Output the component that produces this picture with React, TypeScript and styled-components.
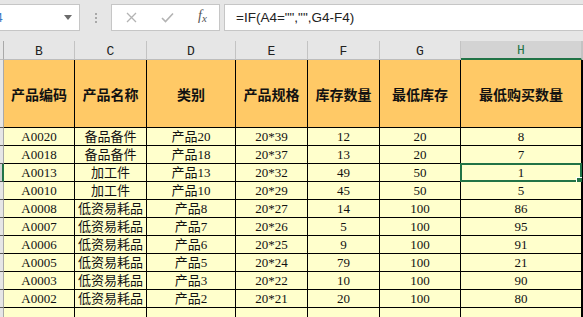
import React from 'react';
import styled, { createGlobalStyle, css } from 'styled-components';

const GREEN = '#217346';

const GlobalStyle = createGlobalStyle`
  html, body {
    margin: 0;
    padding: 0;
    background: #ffffff;
    overflow: hidden;
  }
  * {
    box-sizing: border-box;
  }
`;

const columns = ['B', 'C', 'D', 'E', 'F', 'G', 'H'];
const titles = ['产品编码', '产品名称', '类别', '产品规格', '库存数量', '最低库存', '最低购买数量'];

const rows: (string | number)[][] = [
  ['A0020', '备品备件', '产品20', '20*39', 12, 20, 8],
  ['A0018', '备品备件', '产品18', '20*37', 13, 20, 7],
  ['A0013', '加工件', '产品13', '20*32', 49, 50, 1],
  ['A0010', '加工件', '产品10', '20*29', 45, 50, 5],
  ['A0008', '低资易耗品', '产品8', '20*27', 14, 100, 86],
  ['A0007', '低资易耗品', '产品7', '20*26', 5, 100, 95],
  ['A0006', '低资易耗品', '产品6', '20*25', 9, 100, 91],
  ['A0005', '低资易耗品', '产品5', '20*24', 79, 100, 21],
  ['A0003', '低资易耗品', '产品3', '20*22', 10, 100, 90],
  ['A0002', '低资易耗品', '产品2', '20*21', 20, 100, 80],
];

const activeRow = 2;
const activeCol = 6;

const App = () => {
  return (
    <Page>
      <GlobalStyle />
      <FormulaBar>
        <NameBox>
          <NameText>H4</NameText>
          <svg width="8" height="5" viewBox="0 0 8 5">
            <path d="M0 0 H8 L4 5 Z" fill="#6b6b6b" />
          </svg>
        </NameBox>
        <Grip>
          <svg width="2" height="10" viewBox="0 0 2 10">
            <rect x="0" y="0" width="2" height="2" fill="#a8a8a8" />
            <rect x="0" y="4" width="2" height="2" fill="#a8a8a8" />
            <rect x="0" y="8" width="2" height="2" fill="#a8a8a8" />
          </svg>
        </Grip>
        <ButtonGroup>
          <IconButton>
            <svg width="11" height="11" viewBox="0 0 11 11">
              <path d="M1 1 L10 10 M10 1 L1 10" stroke="#b3b3b3" strokeWidth="1.3" fill="none" />
            </svg>
          </IconButton>
          <IconButton>
            <svg width="13" height="11" viewBox="0 0 13 11">
              <path d="M1 6 L4.5 9.5 L12 1.5" stroke="#b3b3b3" strokeWidth="1.6" fill="none" />
            </svg>
          </IconButton>
          <FxLabel>
            f<sub>x</sub>
          </FxLabel>
        </ButtonGroup>
        <FormulaInput>=IF(A4="","",G4-F4)</FormulaInput>
      </FormulaBar>

      <Sheet>
        <RowHead $kind="letters" />
        {columns.map((c, i) => (
          <ColLetter key={c} $active={i === activeCol}>
            {c}
          </ColLetter>
        ))}
        <ColLetter $active={false} />

        <RowHead $kind="title" />
        {titles.map((t) => (
          <TitleCell key={t}>{t}</TitleCell>
        ))}
        <TitleCell />

        {rows.map((r, ri) => (
          <React.Fragment key={ri}>
            <RowHead $kind="data" $active={ri === activeRow} />
            {r.map((v, ci) => (
              <DataCell key={ci}>
                {v}
                {ri === activeRow && ci === activeCol && (
                  <>
                    <Selection />
                    <FillHandle />
                  </>
                )}
              </DataCell>
            ))}
            <DataCell />
          </React.Fragment>
        ))}

        <RowHead $kind="data" />
        {columns.map((c) => (
          <DataCell key={c} />
        ))}
        <DataCell />
      </Sheet>
    </Page>
  );
};

export default App;

const Page = styled.div`
  width: 583px;
  height: 317px;
  overflow: hidden;
  background: #e6e6e6;
`;

const FormulaBar = styled.div`
  height: 41px;
  display: flex;
  align-items: flex-start;
  padding-top: 4px;
`;

const Box = css`
  height: 27px;
  background: #ffffff;
  border: 1px solid #c6c6c6;
`;

const NameBox = styled.div`
  ${Box};
  width: 100px;
  margin-left: -20px;
  display: flex;
  align-items: center;
  justify-content: space-between;
  padding: 0 7px 0 6px;
  border-left: none;
`;

const NameText = styled.span`
  font-family: 'Liberation Sans', Arial, sans-serif;
  font-size: 13px;
  color: #3b78c4;
`;

const Grip = styled.div`
  width: 31px;
  height: 27px;
  display: flex;
  align-items: center;
  justify-content: center;
`;

const ButtonGroup = styled.div`
  ${Box};
  width: 109px;
  display: flex;
  align-items: center;
  padding-left: 14px;
`;

const IconButton = styled.div`
  width: 35px;
  display: flex;
  align-items: center;
  justify-content: flex-start;
`;

const FxLabel = styled.div`
  font-family: 'Liberation Serif', serif;
  font-style: italic;
  font-size: 14px;
  color: #555555;
  margin-left: 2px;
  margin-top: -3px;

  sub {
    font-size: 11px;
    vertical-align: -2px;
  }
`;

const FormulaInput = styled.div`
  ${Box};
  flex: 1;
  margin-left: 4px;
  margin-right: -2px;
  display: flex;
  align-items: center;
  padding-left: 11px;
  font-family: 'Liberation Sans', Arial, sans-serif;
  font-size: 13.5px;
  color: #222222;
`;

const Sheet = styled.div`
  display: grid;
  grid-template-columns: 4px 71px 72px 89px 72px 72px 81px 121px 1fr;
  grid-template-rows: 19px 68px repeat(10, 18px) 18px;
`;

const RowHead = styled.div<{ $kind: 'letters' | 'title' | 'data'; $active?: boolean }>`
  background: ${(p) => (p.$active ? '#d2d2d2' : '#e6e6e6')};
  border-right: 1px solid #a9a9a9;
  border-bottom: 1px solid ${(p) => (p.$kind === 'letters' ? '#bdbdbd' : '#5a5a5a')};
  ${(p) =>
    p.$active &&
    css`
      border-right: 2px solid ${GREEN};
      padding-left: 1px;
    `}
`;

const ColLetter = styled.div<{ $active: boolean }>`
  display: flex;
  align-items: center;
  justify-content: center;
  padding-top: 2px;
  font-family: 'Liberation Mono', monospace;
  font-size: 13px;
  color: ${(p) => (p.$active ? GREEN : '#222222')};
  background: ${(p) => (p.$active ? '#d3d3d3' : '#e6e6e6')};
  border-right: 1px solid #c3c3c3;
  border-bottom: ${(p) => (p.$active ? `2px solid ${GREEN}` : '1px solid #bdbdbd')};
`;

const TitleCell = styled.div`
  display: flex;
  align-items: center;
  justify-content: center;
  background: #ffc966;
  border-right: 1px solid #000000;
  border-bottom: 1px solid #000000;
  font-family: 'Noto Sans CJK SC', sans-serif;
  font-weight: 700;
  font-size: 14px;
  line-height: 1;
  color: #111111;
`;

const DataCell = styled.div`
  position: relative;
  display: flex;
  align-items: center;
  justify-content: center;
  background: #ffffcc;
  border-right: 1px solid #000000;
  border-bottom: 1px solid #000000;
  font-family: 'Liberation Serif', 'Noto Sans CJK SC', serif;
  font-size: 13px;
  line-height: 1;
  color: #111111;
`;

const Selection = styled.div`
  position: absolute;
  top: -1px;
  left: -1px;
  right: -1px;
  bottom: -1px;
  border: 2px solid ${GREEN};
  pointer-events: none;
`;

const FillHandle = styled.div`
  position: absolute;
  right: -2px;
  bottom: -3px;
  width: 7px;
  height: 7px;
  background: ${GREEN};
  border-left: 1px solid #ffffff;
  border-top: 1px solid #ffffff;
`;
